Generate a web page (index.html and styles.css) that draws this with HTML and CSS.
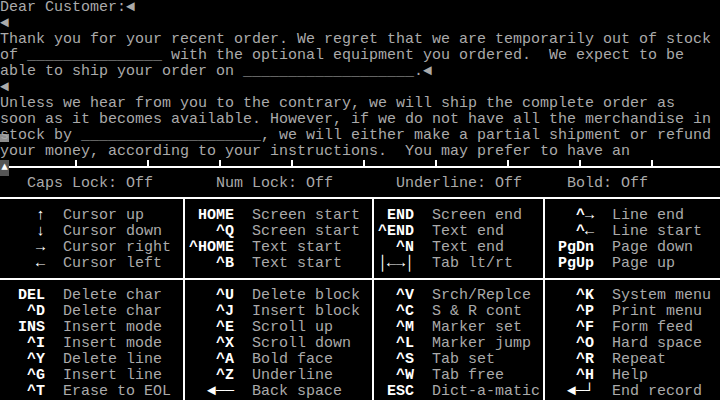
FILE: index.html
```html
<!DOCTYPE html>
<html>
<head>
<meta charset="utf-8">
<link rel="stylesheet" href="styles.css">
</head>
<body>
<div class="screen">
<pre class="doc">Dear Customer:◄
◄
Thank you for your recent order. We regret that we are temporarily out of stock
of _______________ with the optional equipment you ordered.  We expect to be
able to ship your order on ___________________.◄
◄
Unless we hear from you to the contrary, we will ship the complete order as
soon as it becomes available. However, if we do not have all the merchandise in
stock by ____________________, we will either make a partial shipment or refund
your money, according to your instructions.  You may prefer to have an</pre>
<div class="ruler"><span class="mark">▲</span><span class="rule"></span></div>
<pre class="status">   Caps Lock: Off       Num Lock: Off       Underline: Off     Bold: Off</pre>
<div class="board">
  <div class="hl top"></div>
  <div class="hl mid"></div>
  <div class="vl v1"></div>
  <div class="vl v2"></div>
  <div class="vl v3"></div>

  <div class="panel c1 s1">
    <div class="r"><span class="k">↑</span><span class="d">Cursor up</span></div>
    <div class="r"><span class="k">↓</span><span class="d">Cursor down</span></div>
    <div class="r"><span class="k">→</span><span class="d">Cursor right</span></div>
    <div class="r"><span class="k">←</span><span class="d">Cursor left</span></div>
  </div>
  <div class="panel c3 s1">
    <div class="r"><span class="k">HOME</span><span class="d">Screen start</span></div>
    <div class="r"><span class="k">^Q</span><span class="d">Screen start</span></div>
    <div class="r"><span class="k">^HOME</span><span class="d">Text start</span></div>
    <div class="r"><span class="k">^B</span><span class="d">Text start</span></div>
  </div>
  <div class="panel c5 s1 narrow">
    <div class="r"><span class="k">END</span><span class="d">Screen end</span></div>
    <div class="r"><span class="k">^END</span><span class="d">Text end</span></div>
    <div class="r"><span class="k">^N</span><span class="d">Text end</span></div>
    <div class="r"><span class="k">│←→│</span><span class="d">Tab lt/rt</span></div>
  </div>
  <div class="panel c7 s1">
    <div class="r"><span class="k">^→</span><span class="d">Line end</span></div>
    <div class="r"><span class="k">^←</span><span class="d">Line start</span></div>
    <div class="r"><span class="k">PgDn</span><span class="d">Page down</span></div>
    <div class="r"><span class="k">PgUp</span><span class="d">Page up</span></div>
  </div>

  <div class="panel c1 s2">
    <div class="r"><span class="k">DEL</span><span class="d">Delete char</span></div>
    <div class="r"><span class="k">^D</span><span class="d">Delete char</span></div>
    <div class="r"><span class="k">INS</span><span class="d">Insert mode</span></div>
    <div class="r"><span class="k">^I</span><span class="d">Insert mode</span></div>
    <div class="r"><span class="k">^Y</span><span class="d">Delete line</span></div>
    <div class="r"><span class="k">^G</span><span class="d">Insert line</span></div>
    <div class="r"><span class="k">^T</span><span class="d">Erase to EOL</span></div>
  </div>
  <div class="panel c3 s2">
    <div class="r"><span class="k">^U</span><span class="d">Delete block</span></div>
    <div class="r"><span class="k">^J</span><span class="d">Insert block</span></div>
    <div class="r"><span class="k">^E</span><span class="d">Scroll up</span></div>
    <div class="r"><span class="k">^X</span><span class="d">Scroll down</span></div>
    <div class="r"><span class="k">^A</span><span class="d">Bold face</span></div>
    <div class="r"><span class="k">^Z</span><span class="d">Underline</span></div>
    <div class="r"><span class="k">◄──</span><span class="d">Back space</span></div>
  </div>
  <div class="panel c5 s2 narrow">
    <div class="r"><span class="k">^V</span><span class="d">Srch/Replce</span></div>
    <div class="r"><span class="k">^C</span><span class="d">S &amp; R cont</span></div>
    <div class="r"><span class="k">^M</span><span class="d">Marker set</span></div>
    <div class="r"><span class="k">^L</span><span class="d">Marker jump</span></div>
    <div class="r"><span class="k">^S</span><span class="d">Tab set</span></div>
    <div class="r"><span class="k">^W</span><span class="d">Tab free</span></div>
    <div class="r"><span class="k">ESC</span><span class="d">Dict-a-matic</span></div>
  </div>
  <div class="panel c7 s2">
    <div class="r"><span class="k">^K</span><span class="d">System menu</span></div>
    <div class="r"><span class="k">^P</span><span class="d">Print menu</span></div>
    <div class="r"><span class="k">^F</span><span class="d">Form feed</span></div>
    <div class="r"><span class="k">^O</span><span class="d">Hard space</span></div>
    <div class="r"><span class="k">^R</span><span class="d">Repeat</span></div>
    <div class="r"><span class="k">^H</span><span class="d">Help</span></div>
    <div class="r"><span class="k">◄─┘</span><span class="d">End record</span></div>
  </div>
</div>
</div>
</body>
</html>
```
FILE: styles.css
```css
html, body {
  margin: 0;
  padding: 0;
  background: #000;
}

.screen {
  width: 720px;
  height: 400px;
  overflow: hidden;
  background: #000;
  color: #aaaaaa;
  font-family: "Liberation Mono", "DejaVu Sans Mono", monospace;
  font-size: 15px;
  line-height: 16px;
}

pre {
  margin: 0;
  font: inherit;
  white-space: pre;
}

.doc {
  height: 160px;
  /* block cursor under the first cell of row 8 */
  background: linear-gradient(#8c8c8c, #8c8c8c) 0 134px / 9px 8px no-repeat;
}

.ruler {
  display: flex;
  height: 16px;
}

.mark {
  width: 9px;
  height: 16px;
  background: #555;
  color: #fff;
  font-size: 11px;
  line-height: 15px;
  text-align: center;
}

.rule {
  flex: 1;
  background:
    linear-gradient(#fff, #fff) 0 6px / 100% 2px no-repeat,
    repeating-linear-gradient(to right, transparent 0 66px, #fff 66px 68px, transparent 68px 72px) 0 0 / 100% 7px no-repeat;
}

.status {
  height: 16px;
}

.board {
  display: grid;
  grid-template-columns: 180px 9px 180px 9px 162px 9px 171px;
  grid-template-rows: 16px 64px 16px 112px;
}

.hl {
  grid-column: 1 / -1;
  background: linear-gradient(#fff, #fff) 0 5px / 100% 2px no-repeat;
}

.hl.top { grid-row: 1; }
.hl.mid { grid-row: 3; background-position: 0 6px; }

.vl {
  grid-row: 1 / -1;
  background: linear-gradient(#fff, #fff) 3px 5px / 2px 100% no-repeat;
}

.v1 { grid-column: 2; }
.v2 { grid-column: 4; }
.v3 { grid-column: 6; }

.c1 { grid-column: 1; }
.c3 { grid-column: 3; }
.c5 { grid-column: 5; }
.c7 { grid-column: 7; }
.s1 { grid-row: 2; }
.s2 { grid-row: 4; }

.r {
  display: flex;
  height: 16px;
}

.k {
  width: 45px;
  flex: none;
  margin-right: 18px;
  text-align: right;
  color: #fff;
  font-weight: bold;
  white-space: pre;
}

.narrow .k {
  width: 36px;
}

.d {
  white-space: pre;
}
```
